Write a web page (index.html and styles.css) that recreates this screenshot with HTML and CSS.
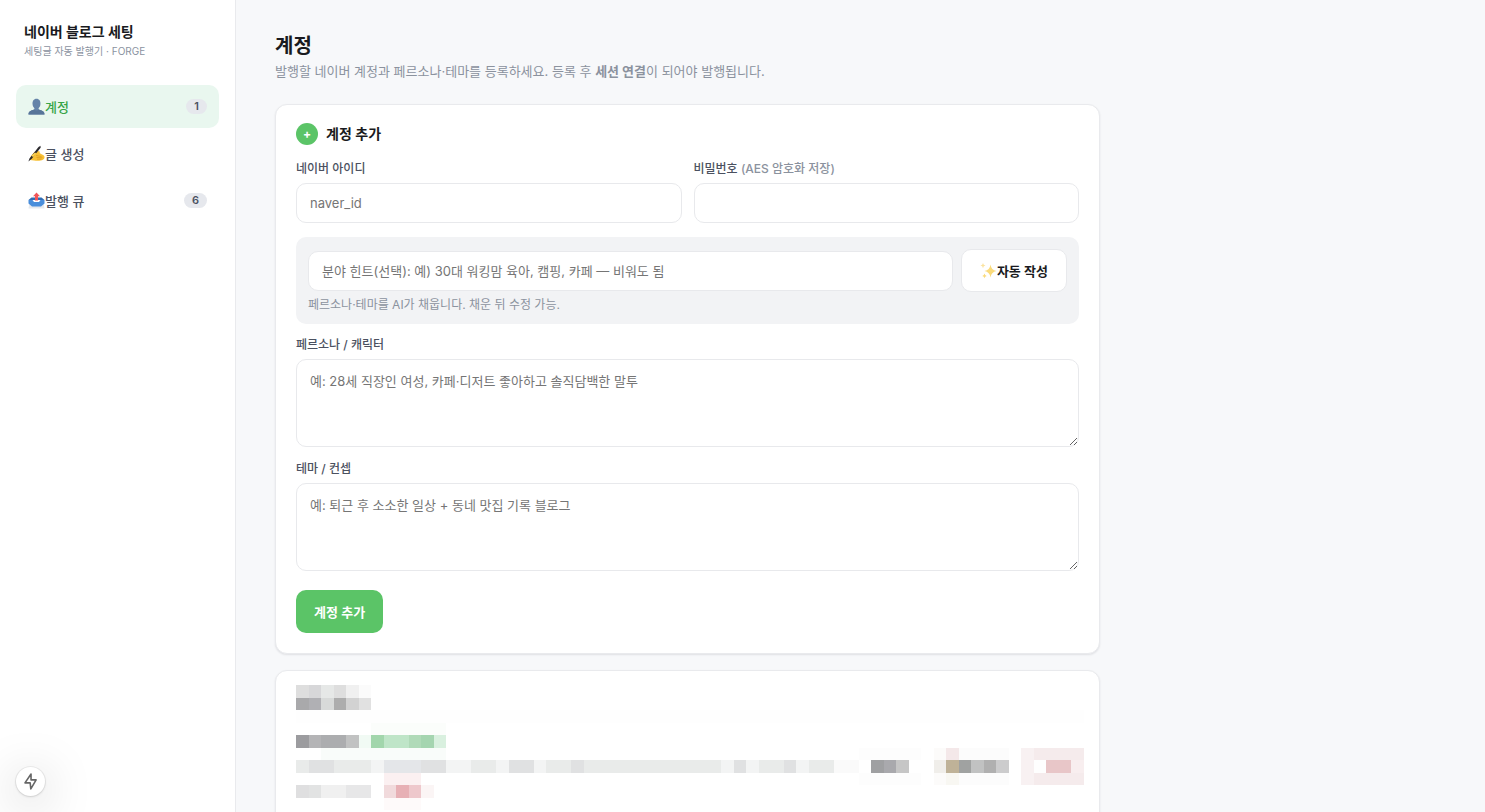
FILE: index.html
```
<!DOCTYPE html>
<html lang="ko">

<head>
  <meta charset="utf-8">
  <meta name="viewport" content="width=device-width">
  <title>네이버 블로그 세팅</title>

  <link rel="stylesheet" href="styles.css">
</head>

<body>
  <div class="app">
    <aside class="sidebar">
      <div class="brand">
        <div class="brand-name">네이버 블로그 세팅</div>
        <div class="brand-sub">세팅글 자동 발행기 · FORGE</div>
      </div>

      <nav class="nav">
        <a class="nav-item active" href="#accounts">
          <svg class="emoji" viewBox="0 0 17 17" aria-hidden="true">
            <path d="M0.500 16.500c0-3 2.200-3.900 4.500-4.500 1.300-.4 1.500-1 1.400-1.800C5.300 9.200 4.700 8 4.600 6.600 4.100 3 5.800.7 8.500.7s4.400 2.300 3.900 5.900c-.1 1.400-.7 2.600-1.800 3.600-.1.800.1 1.400 1.400 1.800 2.300.6 4.500 1.500 4.500 4.500z" fill="#6583a8" />
            <path d="M0.500 16.500c0-3 2.200-3.900 4.500-4.500l1-.5q2.500 2 5 0l1 .5c2.300.6 4.500 1.500 4.500 4.500z" fill="#587599" />
          </svg>
          <span>계정</span>
          <span class="badge">1</span>
        </a>
        <a class="nav-item" href="#write">
          <svg class="emoji" viewBox="0 0 17 17" aria-hidden="true">
            <path d="M2 12.500 5.500 8 8 6l3.500.2.300 2 3.700 2c1.500.8 1.500 3.600-.5 4.600-2 1-6 1.200-9 .6L2 15z" fill="#f8c136" />
            <path d="M8 10.500l5.500 1M8.500 12.500l6 .3M9 14.200l4.500-.1" stroke="#d8961f" stroke-width=".7" fill="none" />
            <path d="M.400 16.500 1.500 13.500 10.500 2l2-1.200.1 2L4 13.500z" fill="#2b2a2e" />
            <path d="M3.500 10.500 7 7.500l1.500 1.300-3.500 3.400z" fill="#fbd052" />
          </svg>
          <span>글 생성</span>
        </a>
        <a class="nav-item" href="#queue">
          <svg class="emoji" viewBox="0 0 17 17" aria-hidden="true">
            <path d="M1.500 10.500h14l1 6H.5z" fill="#e6e9ee" />
            <path d="M3.500 5.500h10L16.500 8H.5z" fill="#2f6db5" />
            <path d="M.500 8h4l1.500 2h5l1.500-2h4v3.500l-3.500 3h-9l-3.500-3z" fill="#4a8edb" />
            <path d="M8.500.5 12 4.200h-2V8.500H7V4.200H5z" fill="#f05558" />
          </svg>
          <span>발행 큐</span>
          <span class="badge">6</span>
        </a>
      </nav>
    </aside>

    <main class="main">
      <h1 class="page-title">계정</h1>
      <p class="page-desc">발행할 네이버 계정과 페르소나·테마를 등록하세요. 등록 후 <b>세션 연결</b>이 되어야 발행됩니다.</p>

      <form class="card">
        <h2 class="card-title"><span class="step">+</span>계정 추가</h2>

        <div class="row">
          <div class="field">
            <label for="naver-id">네이버 아이디</label>
            <input class="input" id="naver-id" type="text" placeholder="naver_id">
          </div>
          <div class="field">
            <label for="naver-pw">비밀번호 <span class="muted">(AES 암호화 저장)</span></label>
            <input class="input" id="naver-pw" type="password">
          </div>
        </div>

        <div class="autofill">
          <div class="autofill-row">
            <input class="input" type="text" aria-label="분야 힌트" placeholder="분야 힌트(선택): 예) 30대 워킹맘 육아, 캠핑, 카페 — 비워도 됨">
            <button class="btn btn-ghost" type="button">
              <svg class="emoji" viewBox="0 0 17 17" aria-hidden="true">
                <path d="M10.500 2.500q.7 5.500 6 6.500-5.300 1-6 6.500-.7-5.500-6-6.500 5.300-1 6-6.500z" fill="#fadb7c" />
                <path d="M3 1q.3 2.200 2.500 2.600Q3.300 4 3 6.200 2.700 4 .5 3.600 2.700 3.200 3 1z" fill="#fbe3a0" />
                <path d="M4.500 11.500q.3 2 2.200 2.400-1.900.4-2.200 2.400-.3-2-2.200-2.400 1.900-.4 2.200-2.400z" fill="#fadb7c" />
              </svg>
              <span>자동 작성</span>
            </button>
          </div>
          <div class="hint">페르소나·테마를 AI가 채웁니다. 채운 뒤 수정 가능.</div>
        </div>

        <div class="field">
          <label for="persona">페르소나 / 캐릭터</label>
          <textarea class="input" id="persona" placeholder="예: 28세 직장인 여성, 카페·디저트 좋아하고 솔직담백한 말투"></textarea>
        </div>
        <div class="field">
          <label for="theme">테마 / 컨셉</label>
          <textarea class="input" id="theme" placeholder="예: 퇴근 후 소소한 일상 + 동네 맛집 기록 블로그"></textarea>
        </div>

        <button class="btn btn-primary" type="submit">계정 추가</button>
      </form>

      <section class="card card-list">
        <!-- masked account list, one unit per mosaic cell -->
        <svg class="mosaic" viewBox="0 0 63 10" shape-rendering="crispEdges" aria-hidden="true">
          <path d="M0 2h63v1H0z" fill="#fefefe" />
          <path d="M0 0h1v1H0zM3 0h1v1H3z" fill="#dedede" />
          <path d="M1 0h1v1H1z" fill="#d7d7d9" />
          <path d="M2 0h1v1H2z" fill="#e6e8e7" />
          <path d="M4 0h1v1H4z" fill="#f0f0f0" />
          <path d="M5 0h1v1H5z" fill="#fbfbfb" />
          <path d="M0 1h1v1H0z" fill="#a9a9ab" />
          <path d="M1 1h1v1H1z" fill="#b0b0b4" />
          <path d="M2 1h1v1H2z" fill="#d8dad9" />
          <path d="M3 1h1v1H3z" fill="#adadad" />
          <path d="M4 1h1v1H4z" fill="#d2d2d2" />
          <path d="M5 1h1v1H5z" fill="#e1e1e1" />

          <path d="M6 3h6v1H6z" fill="#fbfdfb" />
          <path d="M5 4h1v1H5z" fill="#f1faf4" />
          <path d="M0 4h1v1H0z" fill="#9c9c9f" />
          <path d="M1 4h1v1H1z" fill="#b4b4b6" />
          <path d="M2 4h2v1H2z" fill="#acadaf" />
          <path d="M4 4h1v1H4z" fill="#c1c2c2" />
          <path d="M6 4h1v1H6z" fill="#a2d6ac" />
          <path d="M7 4h2v1H7z" fill="#bfe5c8" />
          <path d="M9 4h1v1H9z" fill="#b0dab8" />
          <path d="M10 4h1v1h-1z" fill="#a5d5b0" />
          <path d="M11 4h1v1h-1z" fill="#d9f0df" />
          <path d="M2 5h10v1H2z" fill="#f9fcfa" />

          <path d="M0 6h43v1H0z" fill="#e9ebea" />
          <path d="M1 6h2v1H1zM10 6h2v1h-2zM17 6h2v1h-2zM22 6h1v1h-1zM35 6h1v1h-1zM39 6h1v1h-1z" fill="#e0e1e2" />
          <path d="M6 6h1v1H6zM12 6h2v1h-2zM16 6h1v1h-1zM19 6h1v1h-1zM34 6h1v1h-1zM36 6h1v1h-1zM40 6h1v1h-1z" fill="#f3f4f4" />
          <path d="M7 6h3v1H7z" fill="#e4e6e9" />
          <path d="M43 6h2v1h-2z" fill="#fafafa" />
          <path d="M45 5h5v1h-5zM45 7h5v1h-5z" fill="#fdfdfd" />
          <path d="M46 6h1v1h-1z" fill="#9fa0a2" />
          <path d="M47 6h1v1h-1z" fill="#a9a9ad" />
          <path d="M48 6h1v1h-1z" fill="#c6c6c6" />
          <path d="M51 5h1v3h-1z" fill="#fcfbfa" />
          <path d="M51 6h1v1h-1z" fill="#f0eeea" />
          <path d="M52 5h1v1h-1z" fill="#f4e8e9" />
          <path d="M52 6h1v1h-1z" fill="#bfb298" />
          <path d="M52 7h1v1h-1z" fill="#f8f7f2" />
          <path d="M53 5h4v1h-4zM53 7h4v1h-4z" fill="#fcfcfc" />
          <path d="M53 6h1v1h-1z" fill="#a0a2a1" />
          <path d="M54 6h1v1h-1z" fill="#c1c2c2" />
          <path d="M55 6h1v1h-1z" fill="#b0b0b0" />
          <path d="M56 6h1v1h-1z" fill="#cccccd" />
          <path d="M58 5h1v3h-1z" fill="#f8f1f2" />
          <path d="M59 5h4v3h-4z" fill="#f5ebec" />
          <path d="M59 6h1v1h-1z" fill="#fefefe" />
          <path d="M60 6h2v1h-2z" fill="#e8c6c8" />
          <path d="M62 6h1v1h-1z" fill="#f8eeef" />

          <path d="M7 7h3v1H7z" fill="#fbf0f1" />
          <path d="M7 9h3v1H7z" fill="#fefafa" />
          <path d="M0 8h1v1H0z" fill="#dfdfe0" />
          <path d="M1 8h1v1H1z" fill="#e2e3e3" />
          <path d="M2 8h2v1H2z" fill="#f0f0f0" />
          <path d="M4 8h2v1H4z" fill="#e7e7e8" />
          <path d="M7 8h1v1H7z" fill="#f1dadc" />
          <path d="M8 8h1v1H8z" fill="#e7b0b5" />
          <path d="M9 8h1v1H9z" fill="#eec8cc" />
          <path d="M10 8h1v1h-1z" fill="#fbf5f5" />
        </svg>
      </section>
    </main>
  </div>

  <button class="dev-button" type="button" aria-label="개발 도구">
    <svg viewBox="0 0 16 16" fill="none" stroke="#666" stroke-width="1.500" stroke-linejoin="round" aria-hidden="true">
      <path d="M8.500 1 2.800 9.300H7.700L8.300 15 13.300 6.500H8.500z" />
    </svg>
  </button>
</body>

</html>
```
FILE: styles.css
```
* {
  box-sizing: border-box;
}

body {
  margin: 0;
  background: #f7f8fa;
  color: #191a20;
  font-family: Inter, "Noto Sans CJK KR", sans-serif;
  font-size: 13px;
  line-height: 20px;
}

.app {
  display: flex;
  height: 100vh;
  overflow: hidden;
}

/* sidebar */
.sidebar {
  flex: 0 0 236px;
  padding: 22px 16px;
  background: #fff;
  border-right: 1px solid #e9eaed;
}

.brand {
  padding: 0 8px;
  margin-bottom: 25px;
}

.brand-name {
  font-size: 14px;
  font-weight: 700;
}

.brand-sub {
  color: #8b93a1;
  font-size: 10px;
  line-height: 18px;
}

.nav {
  display: flex;
  flex-direction: column;
  gap: 4px;
}

.nav-item {
  display: flex;
  align-items: center;
  height: 43px;
  padding: 0 12px;
  border-radius: 10px;
  color: #4b5160;
  font-weight: 500;
  text-decoration: none;
}

.nav-item.active {
  background: #e9f7ef;
  color: #37a548;
}

.emoji {
  flex: none;
  width: 17px;
  height: 17px;
}

.badge {
  margin-left: auto;
  padding: 0 8px;
  border-radius: 8px;
  background: #e6e8ed;
  color: #4b5160;
  font-size: 11px;
  font-weight: 600;
  line-height: 15px;
}

/* content */
.main {
  flex: 1;
  min-width: 0;
  padding: 31px 39px;
}

.page-title {
  margin: 0;
  font-size: 20px;
  font-weight: 700;
  line-height: 30px;
}

.page-desc {
  margin: 0 0 23px;
  color: #8b929e;
}

.card {
  max-width: 825px;
  margin-bottom: 16px;
  padding: 18px 20px 20px;
  background: #fff;
  border: 1px solid #e9eaed;
  border-radius: 12px;
  box-shadow: 0 1px 2px rgba(20, 24, 36, 0.1);
}

.card-title {
  display: flex;
  align-items: center;
  gap: 8px;
  margin: 0 0 15px;
  font-size: 14px;
  font-weight: 600;
  line-height: 22px;
}

.step {
  width: 22px;
  height: 22px;
  border-radius: 50%;
  background: #5bc467;
  color: #fff;
  font-size: 12px;
  font-weight: 700;
  text-align: center;
}

.row {
  display: flex;
  gap: 12px;
  margin-bottom: 14px;
}

.field {
  flex: 1;
  margin-bottom: 13px;
}

.row .field {
  margin-bottom: 0;
}

label {
  display: block;
  margin-bottom: 5px;
  color: #4b5160;
  font-size: 12px;
  font-weight: 500;
  line-height: 18px;
}

.muted {
  color: #8b929e;
}

.input {
  display: block;
  width: 100%;
  height: 40px;
  padding: 0 13px;
  background: #fff;
  border: 1px solid #e8e9ec;
  border-radius: 10px;
  color: #191a20;
  font: inherit;
}

.input::placeholder {
  color: #757575;
}

textarea.input {
  height: 88px;
  padding: 11px 13px;
  resize: vertical;
}

.autofill {
  margin-bottom: 12px;
  padding: 12px;
  border-radius: 10px;
  background: #f2f3f5;
}

.autofill-row {
  display: flex;
  align-items: center;
  gap: 8px;
}

.autofill-row .input {
  flex: 1;
}

.hint {
  margin-top: 5px;
  color: #8b929e;
  font-size: 12px;
  line-height: 15px;
}

.btn {
  display: inline-flex;
  align-items: center;
  justify-content: center;
  height: 43px;
  padding: 0 18px;
  border: 0;
  border-radius: 10px;
  font: inherit;
  font-weight: 600;
}

.btn-ghost {
  background: #fff;
  border: 1px solid #e8e9ec;
  color: #191a20;
}

.btn-primary {
  margin-top: 6px;
  background: #5bc467;
  color: #fff;
}

.card-list {
  padding: 14px 15px 20px 20px;
}

.mosaic {
  display: block;
  width: 100%;
}

.dev-button {
  position: fixed;
  left: 16px;
  bottom: 16px;
  display: flex;
  align-items: center;
  justify-content: center;
  width: 29px;
  height: 29px;
  padding: 0;
  border: 0;
  border-radius: 50%;
  background: #fff;
  box-shadow: 0 0 0 1px rgba(0, 0, 0, 0.06), 0 1px 3px rgba(0, 0, 0, 0.12), 0 8px 48px rgba(0, 0, 0, 0.25);
}

.dev-button svg {
  width: 17px;
  height: 17px;
}
```
